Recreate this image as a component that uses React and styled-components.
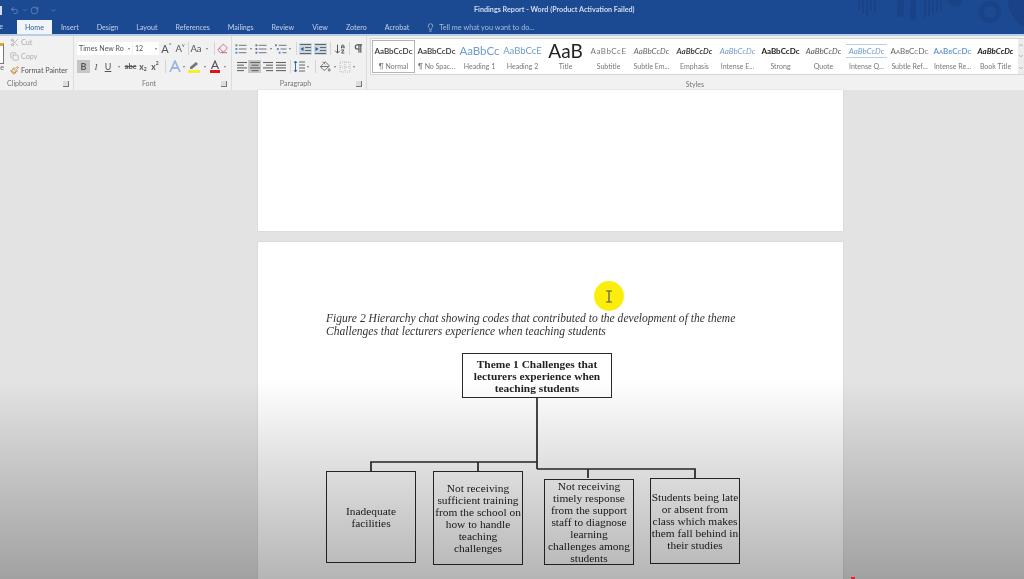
import styled, { createGlobalStyle } from "styled-components";
import {
  Scissors,
  Copy,
  Paintbrush,
  Lightbulb,
  Undo2,
  RotateCw,
  Eraser,
  PaintBucket,
  Pilcrow,
  ArrowDownAZ,
  ChevronDown,
  ChevronUp,
} from "lucide-react";

const TABS = ["Insert", "Design", "Layout", "References", "Mailings", "Review", "View", "Zotero", "Acrobat"];

const STYLES = [
  { label: "¶ Normal", preview: "AaBbCcDc", weight: 600, color: "#333", selected: true },
  { label: "¶ No Spac...", preview: "AaBbCcDc", weight: 600, color: "#333" },
  { label: "Heading 1", preview: "AaBbCc", size: 11.5, color: "#6f9cc8" },
  { label: "Heading 2", preview: "AaBbCcE", size: 9.5, color: "#6f9cc8" },
  { label: "Title", preview: "AaB", size: 19, color: "#222" },
  { label: "Subtitle", preview: "AaBbCcE", color: "#777", spacing: 0.5 },
  { label: "Subtle Em...", preview: "AaBbCcDc", italic: true, color: "#666" },
  { label: "Emphasis", preview: "AaBbCcDc", italic: true, weight: 600, color: "#333" },
  { label: "Intense E...", preview: "AaBbCcDc", italic: true, color: "#6f9cc8" },
  { label: "Strong", preview: "AaBbCcDc", weight: 700, color: "#222" },
  { label: "Quote", preview: "AaBbCcDc", italic: true, color: "#555" },
  { label: "Intense Q...", preview: "AaBbCcDc", italic: true, color: "#6f9cc8", ruled: true },
  { label: "Subtle Ref...", preview: "AaBbCcDc", color: "#666", caps: true },
  { label: "Intense Re...", preview: "AaBbCcDc", color: "#5b93c9", weight: 600, caps: true },
  { label: "Book Title", preview: "AaBbCcDc", italic: true, weight: 700, color: "#222" },
];

function Lines({ rows }) {
  return (
    <svg width="12" height="11" viewBox="0 0 12 11" stroke="#666" strokeWidth="1.1">
      {rows.map(([x1, x2], i) => (
        <line key={i} x1={x1} x2={x2} y1={1.5 + i * 2.7} y2={1.5 + i * 2.7} />
      ))}
    </svg>
  );
}

function ListIcon({ tree, numbered }) {
  return (
    <svg width="13" height="12" viewBox="0 0 13 12" strokeWidth="1.1">
      {[0, 1, 2].map((i) => (
        <g key={i}>
          <rect x={tree ? i * 2 : 0.5} y={1 + i * 4} width="2" height="2" fill={numbered ? "#4d6f9e" : "#5d7fae"} />
          <line x1={tree ? 4 + i * 2 : 4} x2="12.5" y1={2 + i * 4} y2={2 + i * 4} stroke="#777" />
        </g>
      ))}
    </svg>
  );
}

function IndentIcon({ flip }) {
  return (
    <svg width="13" height="12" viewBox="0 0 13 12" stroke="#666" strokeWidth="1">
      <rect width="13" height="12" fill="#c9d6e4" stroke="none" />
      <line x1="1" x2="12" y1="1.5" y2="1.5" />
      <line x1="6" x2="12" y1="4.5" y2="4.5" />
      <line x1="6" x2="12" y1="7.5" y2="7.5" />
      <line x1="1" x2="12" y1="10.5" y2="10.5" />
      <path d={flip ? "M1.5 4v4l3-2z" : "M4.5 4v4l-3-2z"} fill="#2b579a" stroke="none" />
    </svg>
  );
}

function LineSpacingIcon() {
  return (
    <svg width="12" height="13" viewBox="0 0 12 13" strokeWidth="1">
      <path d="M2.5 1v11M1 3l1.5-2L4 3M1 10l1.5 2L4 10" stroke="#2b6cb0" fill="none" />
      <path d="M6 2h6M6 5h6M6 8h6M6 11h6" stroke="#666" />
    </svg>
  );
}

function BordersIcon() {
  return (
    <svg width="12" height="12" viewBox="0 0 12 12" stroke="#bbb" strokeDasharray="1 1" fill="none">
      <rect x="1" y="1" width="10" height="10" />
      <path d="M6 1v10M1 6h10" />
    </svg>
  );
}

function TextEffectIcon() {
  return (
    <svg width="12" height="13" viewBox="0 0 12 13">
      <path d="M1 12 6 1l5 11M3 8h6" fill="none" stroke="#9db6dc" strokeWidth="1.8" />
    </svg>
  );
}

function HighlightIcon() {
  return (
    <svg width="12" height="13" viewBox="0 0 12 13">
      <path d="M2 7 8 2l2 2-6 5H2z" fill="#777" />
      <rect x="0" y="10" width="12" height="3" fill="#f5ee2a" />
    </svg>
  );
}

function FontColorIcon() {
  return (
    <svg width="12" height="13" viewBox="0 0 12 13">
      <path d="M2.5 9 6 1l3.5 8M4 6.5h4" fill="none" stroke="#555" strokeWidth="1.2" />
      <rect x="1" y="10" width="10" height="3" fill="#e0141c" />
    </svg>
  );
}

function Banner() {
  return (
    <BannerArt width="184" height="34" viewBox="0 0 184 34">
      <g fill="#194386">
        {[18, 22, 26, 30, 34].map((x, i) => (
          <rect key={x} x={x} y="0" width="2" height={10 + (i % 3) * 3} />
        ))}
        <rect x="57" y="0" width="7" height="17" rx="3" />
        <rect x="70" y="0" width="6" height="21" rx="3" />
        {[84, 88, 92, 96, 100].map((x, i) => (
          <rect key={x} x={x} y="0" width="2" height={18 - i * 2} />
        ))}
        <circle cx="115" cy="0" r="7" />
        <path d="M168 0h16v27c-9-5-16-15-16-27z" />
      </g>
      <circle cx="150" cy="12" r="8.5" fill="none" stroke="#194386" strokeWidth="5" />
    </BannerArt>
  );
}

export default function App() {
  return (
    <>
      <GlobalStyle />
      <Screen>
        <TitleBar>
          <Banner />
          <QuickAccess>
            <SaveEdge />
            <QuickTool $w={20}>
              <Undo2 size={9} />
              <ChevronDown size={6} />
            </QuickTool>
            <QuickTool $w={20}>
              <RotateCw size={9} />
            </QuickTool>
            <QuickTool $w={14}>
              <ChevronDown size={7} />
            </QuickTool>
          </QuickAccess>
          <DocTitle>Findings Report - Word (Product Activation Failed)</DocTitle>
        </TitleBar>

        <TabBar>
          <FileTab>File</FileTab>
          <Tab $active>Home</Tab>
          {TABS.map((tab) => (
            <Tab key={tab}>{tab}</Tab>
          ))}
          <TellMe>
            <Lightbulb size={9} />
            Tell me what you want to do...
          </TellMe>
        </TabBar>
        <TabEdge />

        <Ribbon>
          <Group $w={74}>
            <GroupBody $row>
              <PasteEdge>
                <PasteIcon />
                <PasteLabel>Paste</PasteLabel>
              </PasteEdge>
              <ClipList>
                <ClipItem $disabled>
                  <Scissors size={9} />
                  Cut
                </ClipItem>
                <ClipItem $disabled>
                  <Copy size={9} />
                  Copy
                </ClipItem>
                <ClipItem>
                  <Paintbrush size={9} color="#b9781c" />
                  Format Painter
                </ClipItem>
              </ClipList>
            </GroupBody>
            <GroupFooter>
              <GroupLabel $w={44}>Clipboard</GroupLabel>
              <Launcher />
            </GroupFooter>
          </Group>

          <Group $w={158} $pad={3}>
            <GroupBody>
              <ToolRow>
                <FontBox $w={55}>
                  Times New Ro
                  <BoxCaret />
                </FontBox>
                <Space $w={1} />
                <FontBox $w={26}>
                  12
                  <BoxCaret />
                </FontBox>
                <Space $w={1} />
                <Tool $w={13} $size={11}>A<Sup>^</Sup></Tool>
                <Tool $w={14} $size={9.5}>A<Sup>v</Sup></Tool>
                <Divider $w={3} />
                <Tool $w={12} $size={9.5}>Aa</Tool>
                <Caret $w={10} />
                <Divider $w={4} />
                <Tool $w={13}>
                  <Eraser size={11} color="#c4647a" />
                </Tool>
              </ToolRow>
              <ToolRow>
                <Tool $w={13} $active $bold>B</Tool>
                <Tool $w={12} $italic $serif>I</Tool>
                <Tool $w={12} $underline>U</Tool>
                <Caret $w={10} />
                <Tool $w={13} $size={7.5} $strike $bold>abc</Tool>
                <Tool $w={12} $size={8.5} $bold>x<Sub>2</Sub></Tool>
                <Tool $w={12} $size={8.5} $bold>x<Sup>2</Sup></Tool>
                <Divider $w={8} />
                <Tool $w={12}>
                  <TextEffectIcon />
                </Tool>
                <Caret $w={6} />
                <Space $w={1} />
                <Tool $w={12}>
                  <HighlightIcon />
                </Tool>
                <Caret $w={9} />
                <Tool $w={12}>
                  <FontColorIcon />
                </Tool>
                <Caret $w={8} />
              </ToolRow>
            </GroupBody>
            <GroupFooter>
              <GroupLabel>Font</GroupLabel>
              <Launcher />
            </GroupFooter>
          </Group>

          <Group $w={135} $pad={3}>
            <GroupBody>
              <ToolRow>
                <Tool $w={12}><ListIcon /></Tool>
                <Caret $w={8} />
                <Tool $w={12}><ListIcon numbered /></Tool>
                <Caret $w={8} />
                <Tool $w={12}><ListIcon tree /></Tool>
                <Caret $w={6} />
                <Divider $w={6} />
                <Tool $w={13}><IndentIcon /></Tool>
                <Space $w={2} />
                <Tool $w={13}><IndentIcon flip /></Tool>
                <Divider $w={7} />
                <Tool $w={12}>
                  <ArrowDownAZ size={12} color="#555" />
                </Tool>
                <Divider $w={6} />
                <Tool $w={12}>
                  <Pilcrow size={11} color="#555" strokeWidth={2.5} />
                </Tool>
              </ToolRow>
              <ToolRow>
                <Tool $w={13}><Lines rows={[[1, 11], [1, 8], [1, 11], [1, 8]]} /></Tool>
                <Tool $w={13} $active><Lines rows={[[1, 11], [2.5, 9.5], [1, 11], [2.5, 9.5]]} /></Tool>
                <Tool $w={13}><Lines rows={[[1, 11], [4, 11], [1, 11], [4, 11]]} /></Tool>
                <Tool $w={13}><Lines rows={[[1, 11], [1, 11], [1, 11], [1, 11]]} /></Tool>
                <Divider $w={6} />
                <Tool $w={12}><LineSpacingIcon /></Tool>
                <Caret $w={6} />
                <Divider $w={8} />
                <Tool $w={12}>
                  <PaintBucket size={11} color="#666" />
                </Tool>
                <Caret $w={7} />
                <Space $w={1} />
                <Tool $w={12}><BordersIcon /></Tool>
                <Caret $w={6} />
              </ToolRow>
            </GroupBody>
            <GroupFooter>
              <GroupLabel>Paragraph</GroupLabel>
              <Launcher />
            </GroupFooter>
          </Group>

          <StylesGroup>
            <Gallery>
              <GalleryItems>
                {STYLES.map((style) => (
                  <StyleCell key={style.label} $selected={style.selected}>
                    <StylePreview
                      $size={style.size}
                      $weight={style.weight}
                      $color={style.color}
                      $italic={style.italic}
                      $spacing={style.spacing}
                      $caps={style.caps}
                      $ruled={style.ruled}
                    >
                      {style.preview}
                    </StylePreview>
                    <StyleName>{style.label}</StyleName>
                  </StyleCell>
                ))}
              </GalleryItems>
              <GalleryScroll>
                <ChevronUp size={6} />
                <ChevronDown size={6} />
                <ChevronDown size={6} />
              </GalleryScroll>
            </Gallery>
            <GroupFooter>
              <GroupLabel>Styles</GroupLabel>
            </GroupFooter>
          </StylesGroup>
        </Ribbon>

        <Workspace>
          <BlankPage />
          <Page>
            <Caption>
              Figure 2 Hierarchy chat showing codes that contributed to the development of the theme
              <br />
              Challenges that lecturers experience when teaching students
            </Caption>
            <Diagram>
              <Connectors width="414" height="215" viewBox="0 0 414 215">
                <path d="M211 45v71M211 109H45v9M152 109v9M211 116h158v9M262 116v9" />
              </Connectors>
              <RootNode>
                Theme 1 Challenges that
                <br />
                lecturers experience when
                <br />
                teaching students
              </RootNode>
              <Node $x={0} $y={118} $h={92}>
                Inadequate
                <br />
                facilities
              </Node>
              <Node $x={107} $y={118} $h={94}>
                Not receiving
                <br />
                sufficient training
                <br />
                from the school on
                <br />
                how to handle
                <br />
                teaching
                <br />
                challenges
              </Node>
              <Node $x={218} $y={126} $h={86}>
                Not receiving
                <br />
                timely response
                <br />
                from the support
                <br />
                staff to diagnose
                <br />
                learning
                <br />
                challenges among
                <br />
                students
              </Node>
              <Node $x={324} $y={125} $h={86}>
                Students being late
                <br />
                or absent from
                <br />
                class which makes
                <br />
                them fall behind in
                <br />
                their studies
              </Node>
            </Diagram>
          </Page>
        </Workspace>

        <Fade />
        <Highlight>
          <svg width="8" height="13" viewBox="0 0 8 13" fill="none" stroke="#55555f" strokeWidth="1.2">
            <path d="M1 1h6M1 12h6M4 1v11" />
          </svg>
        </Highlight>
        <PointerTip />
      </Screen>
    </>
  );
}

const GlobalStyle = createGlobalStyle`
  html, body {
    margin: 0;
    padding: 0;
    background: #e3e3e3;
  }
  body {
    font-family: "Lato", "Liberation Sans", sans-serif;
  }
`;

const Screen = styled.div`
  position: relative;
  display: flex;
  flex-direction: column;
  width: 1024px;
  height: 579px;
  overflow: hidden;
  filter: blur(0.5px);
`;

const TitleBar = styled.div`
  position: relative;
  display: flex;
  align-items: center;
  height: 20px;
  background: #1c4a92;
`;

const BannerArt = styled.svg`
  position: absolute;
  top: 0;
  right: 0;
`;

const QuickAccess = styled.div`
  display: flex;
  align-items: center;
  width: 64px;
  color: #6f8fc0;
`;

const SaveEdge = styled.span`
  width: 2px;
  height: 9px;
  margin-right: 8px;
  background: #d5deec;
`;

const QuickTool = styled.span`
  display: flex;
  align-items: center;
  gap: 3px;
  width: ${(props) => props.$w}px;
`;

const DocTitle = styled.div`
  position: absolute;
  left: 474px;
  top: 4px;
  white-space: nowrap;
  font-size: 7.2px;
  font-weight: 700;
  line-height: 12px;
  color: #d3ddee;
`;

const TabBar = styled.div`
  display: flex;
  align-items: stretch;
  height: 14px;
  background: #1c4a92;
`;

const FileTab = styled.div`
  display: flex;
  justify-content: flex-end;
  width: 3px;
  margin-right: 14px;
  overflow: hidden;
  font-size: 7.1px;
  line-height: 14px;
  color: #d3ddee;
`;

const Tab = styled.div`
  padding: 0 ${(props) => (props.$active ? 8 : 9)}px;
  font-size: 7.1px;
  line-height: 15px;
  color: ${(props) => (props.$active ? "#2f5c9f" : "#c5d2e6")};
  background: ${(props) => (props.$active ? "#f1f4f8" : "transparent")};
`;

const TellMe = styled.div`
  display: flex;
  align-items: center;
  gap: 4px;
  margin-left: 8px;
  font-size: 7.3px;
  color: #a9bcd9;
`;

const TabEdge = styled.div`
  height: 2px;
  background: #b9cde6;
`;

const Ribbon = styled.div`
  display: flex;
  height: 54px;
  background: #f1f1f1;
`;

const Group = styled.div`
  display: flex;
  flex-direction: column;
  flex: none;
  width: ${(props) => props.$w}px;
  padding-left: ${(props) => props.$pad || 0}px;
  box-sizing: border-box;
  border-right: 1px solid #dcdcdc;
`;

const GroupBody = styled.div`
  display: flex;
  flex-direction: ${(props) => (props.$row ? "row" : "column")};
  gap: ${(props) => (props.$row ? 6 : 5)}px;
  flex: 1;
  padding-top: ${(props) => (props.$row ? 1 : 6)}px;
`;

const GroupFooter = styled.div`
  display: flex;
  align-items: center;
  justify-content: space-between;
  height: 13px;
  padding-right: 4px;
`;

const GroupLabel = styled.span`
  ${(props) => (props.$w ? `width: ${props.$w}px;` : "flex: 1;")}
  font-size: 7.1px;
  text-align: center;
  color: #777;
`;

const Launcher = styled.span`
  width: 5px;
  height: 5px;
  border-right: 1px solid #777;
  border-bottom: 1px solid #777;
  background: #ddd;
`;

const PasteEdge = styled.div`
  position: relative;
  flex: none;
  width: 4px;
  overflow: hidden;
`;

const PasteIcon = styled.div`
  position: absolute;
  top: 6px;
  right: 0;
  width: 14px;
  height: 17px;
  border: 1px solid #777;
  border-top: 3px solid #d9a93f;
  background: #fff;
`;

const PasteLabel = styled.span`
  position: absolute;
  top: 26px;
  right: 0;
  font-size: 7.1px;
  color: #666;
`;

const ClipList = styled.div`
  display: flex;
  flex-direction: column;
  gap: 3px;
`;

const ClipItem = styled.div`
  display: flex;
  align-items: center;
  gap: 2px;
  height: 11px;
  white-space: nowrap;
  font-size: 7.2px;
  color: ${(props) => (props.$disabled ? "#adadad" : "#555")};
  svg {
    flex: none;
  }
`;

const ToolRow = styled.div`
  display: flex;
  align-items: center;
  height: 13px;
`;

const FontBox = styled.div`
  display: flex;
  align-items: center;
  justify-content: space-between;
  flex: none;
  width: ${(props) => props.$w}px;
  height: 13px;
  padding: 0 2px;
  box-sizing: border-box;
  overflow: hidden;
  white-space: nowrap;
  font-size: 7.1px;
  color: #555;
  background: #fff;
`;

const BoxCaret = styled.span`
  flex: none;
  border-left: 1.5px solid transparent;
  border-right: 1.5px solid transparent;
  border-top: 2px solid #777;
`;

const Tool = styled.span`
  display: flex;
  align-items: center;
  justify-content: center;
  flex: none;
  width: ${(props) => props.$w}px;
  height: 13px;
  font-family: ${(props) => (props.$serif ? '"Liberation Serif", serif' : "inherit")};
  font-size: ${(props) => props.$size || 9}px;
  font-style: ${(props) => (props.$italic ? "italic" : "normal")};
  font-weight: ${(props) => (props.$bold ? 700 : 400)};
  text-decoration: ${(props) => (props.$underline ? "underline" : props.$strike ? "line-through" : "none")};
  color: #555;
  background: ${(props) => (props.$active ? "#c6c6c6" : "transparent")};
`;

const Sup = styled.span`
  align-self: flex-start;
  font-size: 5px;
  line-height: 7px;
`;

const Sub = styled.span`
  align-self: flex-end;
  font-size: 5px;
  line-height: 7px;
`;

const Caret = styled.span`
  flex: none;
  display: flex;
  justify-content: center;
  width: ${(props) => props.$w}px;
  &::before {
    content: "";
    border-left: 1.5px solid transparent;
    border-right: 1.5px solid transparent;
    border-top: 2px solid #777;
  }
`;

const Space = styled.span`
  flex: none;
  width: ${(props) => props.$w}px;
`;

const Divider = styled.span`
  flex: none;
  display: flex;
  justify-content: center;
  width: ${(props) => props.$w}px;
  height: 13px;
  &::before {
    content: "";
    width: 1px;
    background: #d4d4d4;
  }
`;

const StylesGroup = styled.div`
  display: flex;
  flex-direction: column;
  flex: 1;
  margin-left: 3px;
`;

const Gallery = styled.div`
  display: flex;
  flex: 1;
  margin-top: 2px;
  margin-bottom: 3px;
  border: 1px solid #d6d6d6;
  border-right: 0;
  background: #fff;
`;

const GalleryItems = styled.div`
  display: flex;
  width: 647px;
  padding: 1px;
  box-sizing: border-box;
`;

const StyleCell = styled.div`
  display: flex;
  flex-direction: column;
  align-items: center;
  flex: none;
  width: 43px;
  box-sizing: border-box;
  overflow: hidden;
  border: ${(props) => (props.$selected ? "1.5px solid #b4b4b4" : "1.5px solid transparent")};
`;

const StylePreview = styled.div`
  display: flex;
  align-items: center;
  justify-content: center;
  width: 100%;
  height: 19px;
  box-sizing: border-box;
  overflow: hidden;
  white-space: nowrap;
  font-family: "Lato", sans-serif;
  font-size: ${(props) => props.$size || 8}px;
  font-style: ${(props) => (props.$italic ? "italic" : "normal")};
  font-weight: ${(props) => props.$weight || 400};
  font-variant: ${(props) => (props.$caps ? "small-caps" : "normal")};
  letter-spacing: ${(props) => props.$spacing || 0}px;
  color: ${(props) => props.$color};
  ${(props) => props.$ruled && "border-top: 1px solid #b8d0e6; border-bottom: 1px solid #b8d0e6; height: 14px; margin: 3px 0 2px;"}
`;

const StyleName = styled.div`
  white-space: nowrap;
  font-size: 7px;
  line-height: 12px;
  color: #777;
`;

const GalleryScroll = styled.div`
  display: flex;
  flex-direction: column;
  align-items: center;
  justify-content: space-around;
  flex: 1;
  color: #777;
  background: #ececec;
`;

const Workspace = styled.div`
  display: flex;
  flex-direction: column;
  align-items: center;
  gap: 11px;
  flex: 1;
  min-height: 0;
  padding-left: 77px;
  background: #e3e3e3;
`;

const BlankPage = styled.div`
  flex: none;
  width: 585px;
  height: 141px;
  background: #fff;
  box-shadow: 0 0 1px #b5b5b5;
`;

const Page = styled.div`
  flex: none;
  width: 585px;
  height: 400px;
  padding: 70px 0 0 68px;
  box-sizing: border-box;
  background: #fff;
  box-shadow: 0 0 1px #b5b5b5;
  font-family: "Liberation Serif", "Times New Roman", serif;
  color: #222;
`;

const Caption = styled.p`
  margin: 0 0 15px;
  white-space: nowrap;
  font-size: 11.55px;
  font-style: italic;
  line-height: 13px;
  color: #333;
`;

const Diagram = styled.div`
  position: relative;
  width: 414px;
  height: 215px;
`;

const Connectors = styled.svg`
  position: absolute;
  inset: 0;
  fill: none;
  stroke: #2a2a2a;
  stroke-width: 1.7;
`;

const Node = styled.div`
  position: absolute;
  left: ${(props) => props.$x}px;
  top: ${(props) => props.$y}px;
  display: flex;
  align-items: center;
  justify-content: center;
  width: 90px;
  height: ${(props) => props.$h}px;
  box-sizing: border-box;
  border: 1.5px solid #2a2a2a;
  text-align: center;
  white-space: nowrap;
  font-size: 11.4px;
  line-height: 12px;
`;

const RootNode = styled(Node)`
  left: 136px;
  top: 0;
  width: 150px;
  height: 45px;
  font-weight: 700;
  background: #fff;
`;

const Fade = styled.div`
  position: absolute;
  inset: 380px 0 0;
  pointer-events: none;
  background: linear-gradient(rgba(0, 0, 0, 0), rgba(0, 0, 0, 0.29));
`;

const Highlight = styled.div`
  position: absolute;
  left: 594px;
  top: 281px;
  display: flex;
  align-items: center;
  justify-content: center;
  width: 30px;
  height: 30px;
  border-radius: 50%;
  background: #fbee0c;
`;

const PointerTip = styled.div`
  position: absolute;
  left: 851px;
  top: 577px;
  width: 4px;
  height: 2px;
  background: #e8203c;
`;
